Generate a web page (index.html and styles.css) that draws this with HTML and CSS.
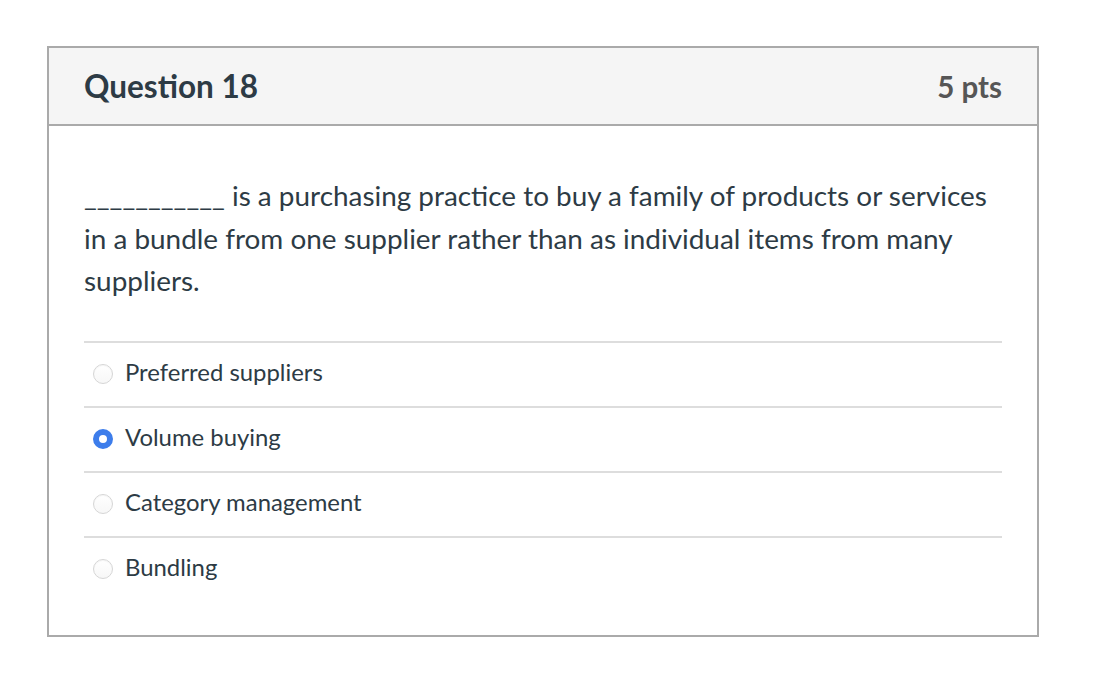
FILE: index.html
```html
<!DOCTYPE html>
<html>
<head>
<meta charset="utf-8">
<link rel="stylesheet" href="styles.css">
</head>
<body>
<div class="card">
  <div class="header">
    <div class="title">Question 18</div>
    <div class="pts">5 pts</div>
  </div>
  <div class="body">
    <div class="question">___________ is a purchasing practice to buy a family of products or services in a bundle from one supplier rather than as individual items from many suppliers.</div>
    <div class="answers">
      <div class="answer"><span class="radio"></span><span class="label">Preferred suppliers</span></div>
      <div class="answer"><span class="radio checked"></span><span class="label">Volume buying</span></div>
      <div class="answer"><span class="radio"></span><span class="label">Category management</span></div>
      <div class="answer"><span class="radio"></span><span class="label">Bundling</span></div>
    </div>
  </div>
</div>
</body>
</html>
```
FILE: styles.css
```css
html, body { margin: 0; padding: 0; background: #fff; }
body {
  font-family: Lato, "Liberation Sans", sans-serif;
  color: #2d3b45;
  padding: 46px 0 0 47px;
}
.card {
  width: 988px;
  border: 2px solid #aaaaaa;
  box-sizing: content-box;
}
.header {
  display: flex;
  justify-content: space-between;
  align-items: center;
  height: 76px;
  background: #f5f5f5;
  border-bottom: 2px solid #aaaaaa;
  padding: 0 35px 0 35px;
}
.title {
  font-size: 31.5px;
  font-weight: 700;
  color: #2d3b45;
}
.pts {
  font-size: 29.5px;
  font-weight: 700;
  color: #565656;
}
.body {
  padding: 48px 35px 34px 35px;
}
.question {
  font-size: 27.9px;
  line-height: 42.5px;
  color: #2d3b45;
}
.answers {
  margin-top: 39px;
}
.answer {
  display: flex;
  align-items: center;
  height: 63px;
  border-top: 2px solid #dddddd;
  padding-left: 9px;
  box-sizing: content-box;
}
.label {
  font-size: 23.9px;
  color: #2d3b45;
  margin-left: 12px;
  margin-bottom: 5px;
}
.radio {
  width: 18px;
  height: 18px;
  border-radius: 50%;
  border: 1px solid #d6d6d6;
  background: linear-gradient(#ffffff, #f7f7f7);
  box-shadow: inset 0 1px 1px rgba(0,0,0,0.04);
  box-sizing: content-box;
  flex: none;
}
.radio.checked {
  width: 8px;
  height: 8px;
  border: 6px solid #3d7deb;
  background: #fff;
  box-shadow: none;
}
```
